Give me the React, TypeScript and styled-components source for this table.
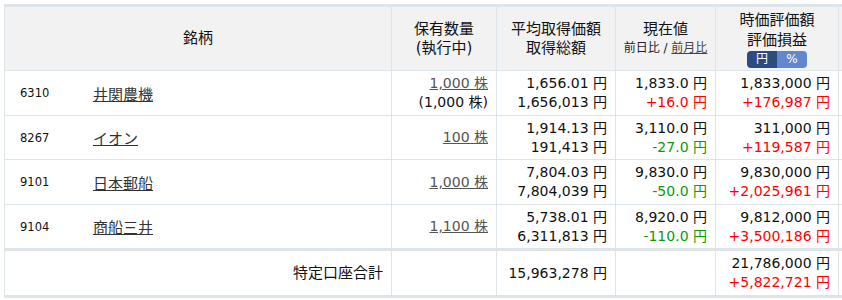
import React from "react";
import styled, { createGlobalStyle } from "styled-components";

const Global = createGlobalStyle`
  html, body { margin: 0; padding: 0; background: #fff; overflow: hidden; }
  body {
    font-family: "DejaVu Sans", "Noto Sans CJK JP", sans-serif;
    color: #111;
    font-size: 14px;
  }
`;

const LINE = "#dde4ea";

const Page = styled.div`
  padding: 4px 0 0 4px;
`;

const Table = styled.div`
  display: grid;
  width: 838px;
  grid-template-columns: 387px 105px 119px 100px 123px 1fr;
  grid-template-rows: 64px 45px 44px 45px 46px 47px;
  border-top: 3px solid ${LINE};
  border-left: 1px solid ${LINE};
`;

const Cell = styled.div<{ $head?: boolean; $align?: "left" | "center" | "right"; $thick?: boolean }>`
  box-sizing: border-box;
  display: flex;
  flex-direction: column;
  justify-content: center;
  align-items: ${(p) => (p.$align === "center" ? "center" : p.$align === "left" ? "flex-start" : "flex-end")};
  text-align: ${(p) => p.$align ?? "right"};
  padding: 0 8px;
  border-right: 1px solid ${LINE};
  border-bottom: ${(p) => (p.$thick ? "3px" : "1px")} solid ${LINE};
  background: ${(p) => (p.$head ? "#f2f2f2" : "#fff")};
  line-height: 19px;
  white-space: nowrap;
  overflow: hidden;
`;

const HeadText = styled.div`
  font-size: 15px;
  line-height: 19px;
  color: #111;
`;

const HeadTall = styled(HeadText)`
  line-height: 20px;
`;

const SubHead = styled.div`
  font-size: 12px;
  line-height: 19px;
  color: #222;
`;

const SubLink = styled.a`
  color: #444;
  text-decoration: underline;
`;

const Toggle = styled.div`
  display: flex;
  width: 60px;
  height: 17px;
  border-radius: 4px;
  overflow: hidden;
  margin-top: 1px;
`;

const ToggleBtn = styled.div<{ $active?: boolean }>`
  flex: 1;
  display: flex;
  align-items: center;
  justify-content: center;
  font-size: 12px;
  line-height: 17px;
  color: #fff;
  background: ${(p) => (p.$active ? "#2e4b80" : "#6387cf")};
`;

const NameCell = styled.div<{ $thick?: boolean }>`
  box-sizing: border-box;
  display: grid;
  grid-template-columns: 73px 1fr;
  align-items: center;
  padding-left: 15px;
  border-right: 1px solid ${LINE};
  border-bottom: ${(p) => (p.$thick ? "3px" : "1px")} solid ${LINE};
`;

const Code = styled.span`
  font-size: 11.5px;
  color: #111;
`;

const NameLink = styled.a`
  font-size: 15px;
  color: #333;
  text-decoration: underline;
  justify-self: start;
`;

const QtyLink = styled.a`
  color: #555;
  text-decoration: underline;
`;

const Line = styled.div<{ $tone?: "up" | "down" }>`
  color: ${(p) => (p.$tone === "up" ? "#ff0000" : p.$tone === "down" ? "#0a9b0a" : "#111")};
`;

const TotalLabel = styled.div`
  font-size: 15px;
  color: #111;
`;

type Row = {
  code: string;
  name: string;
  qty: string;
  pend?: string;
  avg: string;
  total: string;
  price: string;
  chg: string;
  val: string;
  pl: string;
};

const rows: Row[] = [
  { code: "6310", name: "井関農機", qty: "1,000 株", pend: "(1,000 株)", avg: "1,656.01 円", total: "1,656,013 円", price: "1,833.0 円", chg: "+16.0 円", val: "1,833,000 円", pl: "+176,987 円" },
  { code: "8267", name: "イオン", qty: "100 株", avg: "1,914.13 円", total: "191,413 円", price: "3,110.0 円", chg: "-27.0 円", val: "311,000 円", pl: "+119,587 円" },
  { code: "9101", name: "日本郵船", qty: "1,000 株", avg: "7,804.03 円", total: "7,804,039 円", price: "9,830.0 円", chg: "-50.0 円", val: "9,830,000 円", pl: "+2,025,961 円" },
  { code: "9104", name: "商船三井", qty: "1,100 株", avg: "5,738.01 円", total: "6,311,813 円", price: "8,920.0 円", chg: "-110.0 円", val: "9,812,000 円", pl: "+3,500,186 円" },
];

const tone = (s: string) => (s.startsWith("+") ? "up" : s.startsWith("-") ? "down" : undefined);

export default function App() {
  return (
    <Page>
      <Global />
      <Table>
        <Cell $head $align="center">
          <HeadText>銘柄</HeadText>
        </Cell>
        <Cell $head $align="center">
          <HeadText>保有数量</HeadText>
          <HeadText>(執行中)</HeadText>
        </Cell>
        <Cell $head $align="center">
          <HeadText>平均取得価額</HeadText>
          <HeadText>取得総額</HeadText>
        </Cell>
        <Cell $head $align="center">
          <HeadText>現在値</HeadText>
          <SubHead>
            前日比 / <SubLink>前月比</SubLink>
          </SubHead>
        </Cell>
        <Cell $head $align="center">
          <HeadTall>時価評価額</HeadTall>
          <HeadTall>評価損益</HeadTall>
          <Toggle>
            <ToggleBtn $active>円</ToggleBtn>
            <ToggleBtn>%</ToggleBtn>
          </Toggle>
        </Cell>
        <Cell $head />

        {rows.map((r, i) => {
          const last = i === rows.length - 1;
          return (
            <React.Fragment key={r.code}>
              <NameCell $thick={last}>
                <Code>{r.code}</Code>
                <NameLink>{r.name}</NameLink>
              </NameCell>
              <Cell $thick={last}>
                <QtyLink>{r.qty}</QtyLink>
                {r.pend && <Line>{r.pend}</Line>}
              </Cell>
              <Cell $thick={last}>
                <Line>{r.avg}</Line>
                <Line>{r.total}</Line>
              </Cell>
              <Cell $thick={last}>
                <Line>{r.price}</Line>
                <Line $tone={tone(r.chg)}>{r.chg}</Line>
              </Cell>
              <Cell $thick={last}>
                <Line>{r.val}</Line>
                <Line $tone={tone(r.pl)}>{r.pl}</Line>
              </Cell>
              <Cell $thick={last} />
            </React.Fragment>
          );
        })}

        <Cell $thick>
          <TotalLabel>特定口座合計</TotalLabel>
        </Cell>
        <Cell $thick />
        <Cell $thick>
          <Line>15,963,278 円</Line>
        </Cell>
        <Cell $thick />
        <Cell $thick>
          <Line>21,786,000 円</Line>
          <Line $tone="up">+5,822,721 円</Line>
        </Cell>
        <Cell $thick />
      </Table>
    </Page>
  );
}
